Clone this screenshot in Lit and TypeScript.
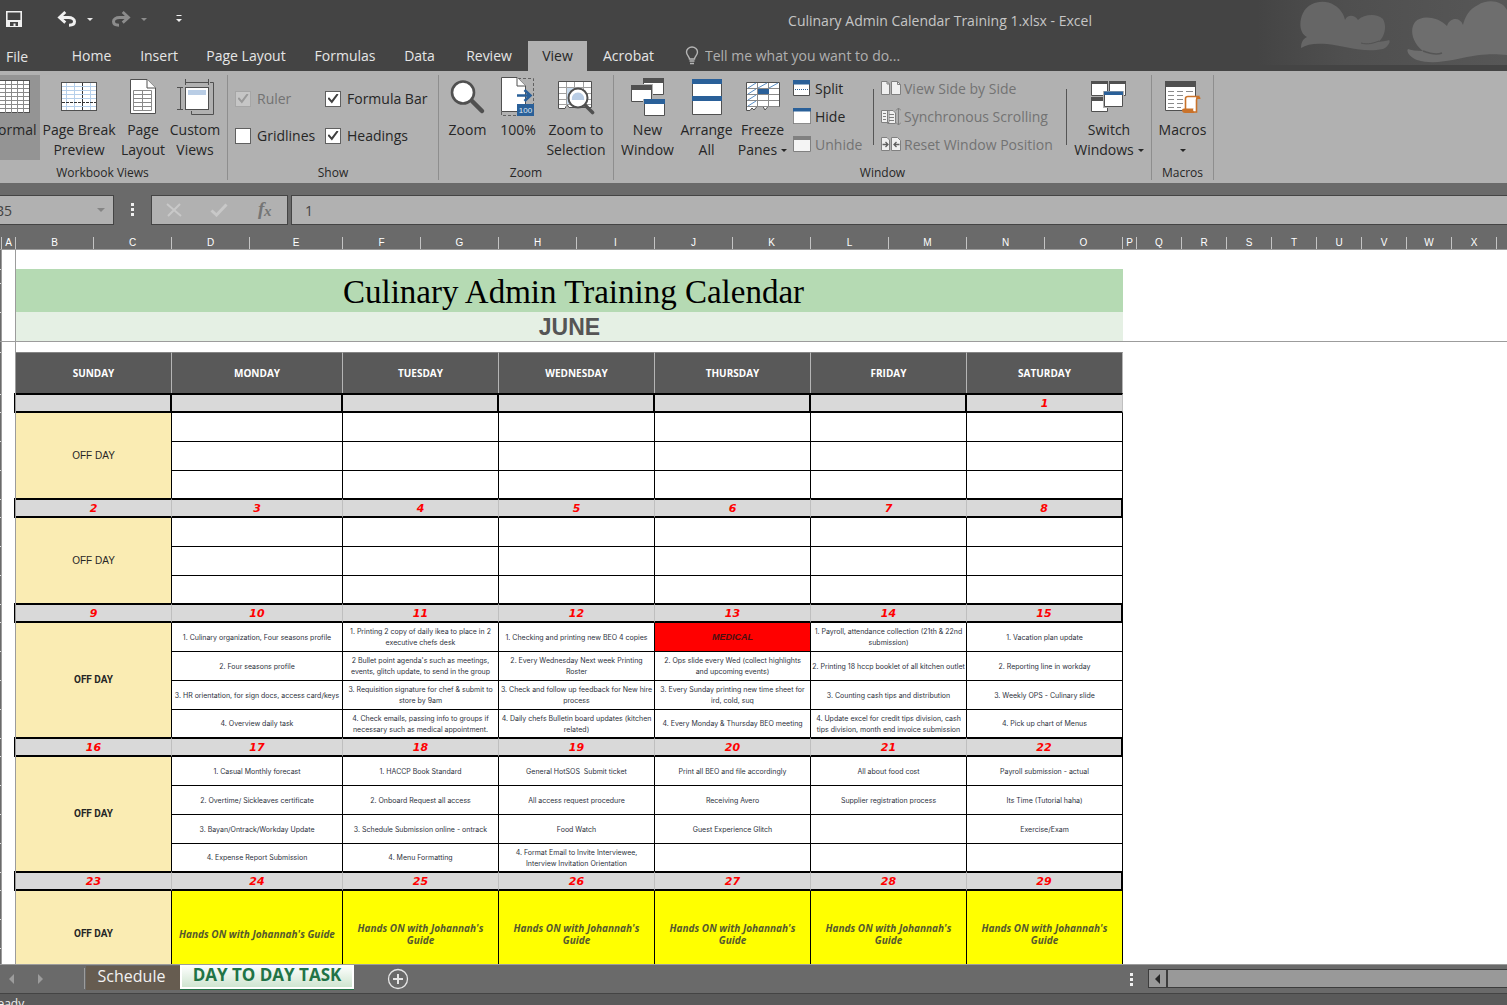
import { LitElement, html, css, svg, nothing } from "lit";
import { customElement } from "lit/decorators.js";
import { classMap } from "lit/directives/class-map.js";
import { styleMap } from "lit/directives/style-map.js";

interface Cell {
  text: string;
  medical?: boolean;
}
interface Week {
  dates: string[];
  boldOff: boolean;
  rows: (string | Cell)[][];
  guide?: boolean;
}

const DAYS = ["SUNDAY", "MONDAY", "TUESDAY", "WEDNESDAY", "THURSDAY", "FRIDAY", "SATURDAY"];
const EMPTY = ["", "", "", "", "", ""];

const WEEKS: Week[] = [
  { dates: ["", "", "", "", "", "", "1"], boldOff: false, rows: [EMPTY, EMPTY, EMPTY] },
  { dates: ["2", "3", "4", "5", "6", "7", "8"], boldOff: false, rows: [EMPTY, EMPTY, EMPTY] },
  {
    dates: ["9", "10", "11", "12", "13", "14", "15"],
    boldOff: true,
    rows: [
      [
        "1. Culinary organization, Four seasons profile",
        "1. Printing 2 copy of daily ikea to place in 2\nexecutive chefs desk",
        "1. Checking and printing new BEO 4 copies",
        { text: "MEDICAL", medical: true },
        "1. Payroll, attendance collection (21th & 22nd\nsubmission)",
        "1. Vacation plan update",
      ],
      [
        "2. Four seasons profile",
        "2 Bullet point agenda's such as meetings,\nevents, glitch update, to send in the group",
        "2. Every Wednesday Next week Printing\nRoster",
        "2. Ops slide every Wed (collect highlights\nand upcoming events)",
        "2. Printing 18 hccp booklet of all kitchen outlet",
        "2. Reporting line in workday",
      ],
      [
        "3. HR orientation, for sign docs, access card/keys",
        "3. Requisition signature for chef & submit to\nstore by 9am",
        "3. Check and follow up feedback for New hire\nprocess",
        "3. Every Sunday printing new time sheet for\nird, cold, suq",
        "3. Counting cash tips and distribution",
        "3. Weekly OPS - Culinary slide",
      ],
      [
        "4. Overview daily task",
        "4. Check emails, passing info to groups if\nnecessary such as medical appointment.",
        "4. Daily chefs Bulletin board updates (kitchen\nrelated)",
        "4. Every Monday & Thursday BEO meeting",
        "4. Update excel for credit tips division, cash\ntips division, month end invoice submission",
        "4. Pick up chart of Menus",
      ],
    ],
  },
  {
    dates: ["16", "17", "18", "19", "20", "21", "22"],
    boldOff: true,
    rows: [
      ["1. Casual Monthly forecast", "1. HACCP Book Standard", "General HotSOS  Submit ticket", "Print all BEO and file accordingly", "All about food cost", "Payroll submission - actual"],
      ["2. Overtime/ Sickleaves certificate", "2. Onboard Request all access", "All access request procedure", "Receiving Avero", "Supplier registration process", "Its Time (Tutorial haha)"],
      ["3. Bayan/Ontrack/Workday Update", "3. Schedule Submission online - ontrack", "Food Watch", "Guest Experience Glitch", "", "Exercise/Exam"],
      ["4. Expense Report Submission", "4. Menu Formatting", "4. Format Email to Invite Interviewee,\nInterview Invitation Orientation", "", "", ""],
    ],
  },
  {
    dates: ["23", "24", "25", "26", "27", "28", "29"],
    boldOff: true,
    guide: true,
    rows: [Array(6).fill("Hands ON with Johannah's Guide")],
  },
];

const COLUMNS: [string, number][] = [
  ["A", 14], ["B", 78], ["C", 78], ["D", 78], ["E", 93], ["F", 78], ["G", 78], ["H", 78],
  ["I", 78], ["J", 78], ["K", 78], ["L", 78], ["M", 78], ["N", 78], ["O", 78], ["P", 14],
  ["Q", 45], ["R", 45], ["S", 45], ["T", 45], ["U", 45], ["V", 45], ["W", 45], ["X", 45], ["", 45],
];

const ROW_TICKS_TOP = [20, 14, 29, 29];
const ROW_TICKS_BOTTOM = [11, 42, 18, 29, 29, 29, 18, 29, 29, 29, 18, 29, 29, 29, 29, 18, 29, 29, 29, 29, 18, 29, 29];

const caret = svg`<path d="M0 0H6L3 3Z" fill="currentColor"/>`;
const caretIcon = html`<svg class="caret" width="6" height="3" viewBox="0 0 6 3">${caret}</svg>`;

const icons = {
  save: html`<svg width="18" height="18" viewBox="0 0 18 18"><path d="M1.800 1.800H16.200V16.200H1.800Z" fill="none" stroke="#f0f0f0" stroke-width="1.600"/><path d="M2 10H16V16H2Z" fill="#f0f0f0"/><path d="M5 12H13V16H10.500V13.500H8.500V16H5Z" fill="#444"/></svg>`,
  undo: html`<svg width="20" height="16" viewBox="0 0 20 16"><path d="M3 6.500H11.500C15 6.500 17.500 8.300 17.500 10.500C17.500 12.700 15.500 14.200 12 14.200" fill="none" stroke="#f0f0f0" stroke-width="3"/><path d="M8.300 1L2.500 6.400L8.300 11.600" fill="none" stroke="#f0f0f0" stroke-width="2.800"/></svg>`,
  redo: html`<svg width="20" height="16" viewBox="0 0 20 16"><path d="M17 6.500H8.500C5 6.500 2.500 8.300 2.500 10.500C2.500 12.700 4.500 14.200 8 14.200" fill="none" stroke="#8c8c8c" stroke-width="3"/><path d="M11.700 1L17.500 6.400L11.700 11.600" fill="none" stroke="#8c8c8c" stroke-width="2.800"/></svg>`,
  customize: html`<svg width="6" height="8" viewBox="0 0 6 8"><path d="M.5.500H5.500" stroke="#f0f0f0"/><path d="M0 4H6L3 7Z" fill="#f0f0f0"/></svg>`,
  bulb: html`<svg width="14" height="19" viewBox="0 0 14 19"><path d="M4.500 13C4.500 10.500 1.500 9.500 1.500 6A5.500 5 0 0 1 12.500 6C12.500 9.500 9.500 10.500 9.500 13Z" fill="none" stroke="#b5b5b5" stroke-width="1.400"/><path d="M4.500 15H9.500M5 17.500H9" stroke="#b5b5b5" stroke-width="1.400"/></svg>`,
  normal: html`<svg width="36" height="34" viewBox="0 0 36 34"><rect x=".5" y=".5" width="35" height="32" fill="#fff" stroke="#505050"/><path d="M5.500 1V33M11.500 1V33M17.500 1V33M23.500 1V33M29.500 1V33M1 4.500H35M1 8.500H35M1 12.500H35M1 16.500H35M1 20.500H35M1 24.500H35M1 28.500H35" stroke="#8a8a8a" fill="none"/></svg>`,
  pageBreak: html`<svg width="36" height="29" viewBox="0 0 36 29"><rect x=".5" y=".5" width="35" height="28" fill="#fff" stroke="#505050"/><path d="M5.500 1V28M13.500 1V28M29.500 1V28M1 4.500H35M1 8.500H35M1 12.500H35M1 16.500H35M1 24.500H35" stroke="#b5cfea" fill="none"/><path d="M21.500 1V28M1 20.500H35" stroke="#333" stroke-dasharray="3 1" fill="none"/></svg>`,
  pageLayout: html`<svg width="26" height="35" viewBox="0 0 26 35"><path d="M.5.500H17L25.500 9V34.500H.5Z" fill="#fff" stroke="#505050"/><path d="M17 .5V9H25.500" fill="#fff" stroke="#505050"/><path d="M3.500 11.500H21.500V31.500H3.500ZM12.500 11.500V31.500M3.500 15.500H21.500M3.500 19.500H21.500M3.500 23.500H21.500M3.500 27.500H21.500" fill="none" stroke="#8a8a8a"/></svg>`,
  custom: html`<svg width="37" height="36" viewBox="0 0 37 36"><path d="M8.500 0V6M31.500 0V6M8.500 3.500H31.500M0 8.500H6M0 30.500H6M3.500 8.500V30.500M33 3.500H36.500V35.500H14.500V32" fill="none" stroke="#505050"/><rect x="8.500" y="8.500" width="23" height="22" fill="#fff" stroke="#505050"/><rect x="11" y="11" width="18" height="5" fill="#b9cde5"/></svg>`,
  zoom: html`<svg width="36" height="36" viewBox="0 0 36 36"><circle cx="13" cy="13.500" r="11" fill="#fff" stroke="#505050" stroke-width="2.600"/><path d="M22 22L32 32" stroke="#505050" stroke-width="4.500" stroke-linecap="round"/></svg>`,
  hundred: html`<svg width="34" height="40" viewBox="0 0 34 40"><path d="M17 1.500H32.500V28M.5 35V38.500H16" fill="none" stroke="#606060" stroke-dasharray="3 2"/><path d="M.5.500H16L24.500 9V34.500H.5Z" fill="#fff" stroke="#505050"/><path d="M16 .5V9H24.500" fill="#fff" stroke="#505050"/><path d="M16 18.500H29M23.500 13L29.500 18.500L23.500 24" fill="none" stroke="#2a6099" stroke-width="2.600"/><rect x="16" y="27" width="17" height="12" fill="#2a6099"/><text x="24.500" y="36" text-anchor="middle" font-size="8" font-family="Liberation Sans, sans-serif" fill="#dfe9f3">100</text></svg>`,
  zoomSel: html`<svg width="38" height="36" viewBox="0 0 38 36"><path d="M1.500 2.500H34.500V28.500H12L10 25.500L8 29.500H1.500Z" fill="#fff" stroke="#505050"/><path d="M9.500 3V28M17.500 3V28M26.500 3V28M2 8.500H34M2 14.500H34M2 20.500H34M2 25.500H34" stroke="#a0a0a0" fill="none"/><rect x="10" y="9" width="7" height="16" fill="#c9dcef"/><circle cx="21" cy="19" r="9.500" fill="#fff" stroke="#505050" stroke-width="2"/><path d="M14.800 21A6.300 6.300 0 1 1 27.200 21Z" fill="#b9cde5"/><path d="M28.500 26.500L35.500 33.500" stroke="#505050" stroke-width="3.600" stroke-linecap="round"/></svg>`,
  newWindow: html`<svg width="36" height="38" viewBox="0 0 36 38"><g stroke="#505050" fill="#fff"><path d="M13.500 .5H33.500V16.500H13.500Z"/><path d="M1.500 7.500H21.500V23.500H1.500Z" stroke="#b1b1b1" stroke-width="3"/><path d="M1.500 7.500H21.500V23.500H1.500Z"/><path d="M14.500 22.500H34.500V37.500H14.500Z" stroke="#b1b1b1" stroke-width="3"/><path d="M14.500 22.500H34.500V37.500H14.500Z"/></g><path d="M13 0H34V5H13ZM1 7H22V12H1Z" fill="#505050"/><path d="M14 21H35V26H14Z" fill="#2a6099"/></svg>`,
  arrange: html`<svg width="30" height="36" viewBox="0 0 30 36"><path d="M.5.500H29.500V35.500H.5Z" fill="#fff" stroke="#505050"/><path d="M0 0H30V5H0ZM0 17H30V22H0Z" fill="#2a6099"/></svg>`,
  freeze: html`<svg width="36" height="32" viewBox="0 0 36 32"><path d="M1.500 1.500H34.500V25.500H23L20 29L18 25.500H12L9 29L7 27L5 29.500H1.500Z" fill="#fff" stroke="#505050"/><path d="M12.500 2V26M23.500 2V26M2 7.500H34M2 13.500H34M2 19.500H34M2 25.500H34" fill="none" stroke="#8a8a8a"/><path d="M3 7L11 2M13 7L22 2M24 7L33 2M3 13L11 8M3 19L11 14M3 25L11 20" stroke="#5b8fc5" fill="none"/><path d="M13 8H24V13H13Z" fill="#2a6099"/></svg>`,
  split: html`<svg width="18" height="17" viewBox="0 0 18 17"><path d="M.5 1.500H16.500V15.500H.5Z" fill="#fff" stroke="#505050"/><path d="M0 0H17V4.500H0Z" fill="#2a6099"/><path d="M2 9.500H15" stroke="#2a6099" stroke-dasharray="1 1"/></svg>`,
  hide: html`<svg width="18" height="17" viewBox="0 0 18 17"><path d="M.5 1.500H17.500V15.500H.5Z" fill="#fff" stroke="#404040" stroke-dasharray="1 1"/><path d="M0 0H18V3.500H0Z" fill="#2a6099"/></svg>`,
  unhide: html`<svg width="18" height="17" viewBox="0 0 18 17"><path d="M.5 1.500H17.500V15.500H.5Z" fill="#f4f4f4" stroke="#808080"/><path d="M0 0H18V4H0Z" fill="#808080"/></svg>`,
  side: html`<svg width="20" height="15" viewBox="0 0 20 15"><path d="M.5.500H6L8.500 3V13.500H.5ZM10.500.500H16.500L19.500 3.500V13.500H10.500Z" fill="#f0f0f0" stroke="#808080"/><path d="M6 .5V3H8.500M16.500 .5V3.500H19.500" fill="none" stroke="#808080"/></svg>`,
  sync: html`<svg width="20" height="19" viewBox="0 0 20 19"><path d="M.5 3.500H8V15.500H.5ZM6.500 3.500H12L14.500 6V16.500H6.500Z" fill="#f0f0f0" stroke="#808080"/><path d="M2 6.500H5M2 9.500H5M2 12.500H5M8 7.500H13M8 10.500H13M8 13.500H13" stroke="#808080"/><path d="M17.500 1V18M15 3.500L17.500 1L20 3.500M15 15.500L17.500 18L20 15.500" fill="none" stroke="#808080"/></svg>`,
  reset: html`<svg width="20" height="15" viewBox="0 0 20 15"><path d="M.5.500H6L8.500 3V13.500H.5ZM10.500.500H16.500L19.500 3.500V13.500H10.500Z" fill="#f0f0f0" stroke="#808080"/><path d="M1.500 7.500H7M4.500 5L7 7.500L4.500 10M18.500 7.500H13M15.500 5L13 7.500L15.500 10" fill="none" stroke="#606060" stroke-width="1.300"/></svg>`,
  switchWin: html`<svg width="36" height="34" viewBox="0 0 36 34"><g fill="#fff" stroke="#505050"><path d="M.5 1.500H16.500V15.500H.5ZM18.500 1.500H34.500V15.500H18.500ZM.5 17.500H16.500V31.500H.5Z"/><path d="M13.500 12.500H31.500V26.500H13.500Z" stroke="#b1b1b1" stroke-width="3"/><path d="M13.500 12.500H31.500V26.500H13.500Z"/></g><path d="M0 1H17V4H0ZM18 1H35V4H18ZM0 17H12V21H0Z" fill="#505050"/><path d="M13 11.500H32V15H13Z" fill="#2a6099"/></svg>`,
  macros: html`<svg width="36" height="34" viewBox="0 0 36 34"><path d="M.5 1.500H30.500V30.500H.5Z" fill="#fff" stroke="#505050"/><path d="M0 1H31V7H0Z" fill="#505050"/><path d="M3 11.500H9M12 11.500H18M21 11.500H28M3 15.500H9M12 15.500H18M3 19.500H9M12 19.500H18M3 23.500H9M12 23.500H18M3 27.500H9M12 27.500H16" stroke="#8a8a8a"/><path d="M20.500 29V18.500Q20.500 16.500 23 16.500H33Q31.500 18 31.500 20V32H22Z" fill="#fff" stroke="#c9722a" stroke-width="1.600"/><path d="M31 16H33Q35.500 16 35.500 19H32ZM17 30Q17 28.500 19 28.500H28.500Q27.500 30 29.500 33H20Q17 33 17 30Z" fill="#c9722a"/></svg>`,
};

@customElement("app-root")
export class AppRoot extends LitElement {
  static styles = css`
    :host {
      display: flex;
      flex-direction: column;
      height: 100vh;
      overflow: hidden;
      background: #6a6a6a;
      font-family: "Open Sans", "Noto Sans", sans-serif;
      font-size: 14px;
      color: #262626;
    }
    * { box-sizing: border-box; }
    svg { display: block; flex: none; }
    button {
      font: inherit;
      color: inherit;
      background: none;
      border: 0;
      padding: 0;
      margin: 0;
    }
    .top {
      flex: none;
      background: #444;
      color: #e6e6e6;
      position: relative;
      overflow: hidden;
    }
    .clouds { position: absolute; right: 0; top: 0; }
    .title {
      display: grid;
      grid-template-columns: 373px 1fr;
      align-items: center;
      height: 41px;
      position: relative;
    }
    .quick { display: flex; align-items: center; padding-left: 5px; height: 38px; align-self: start; }
    .quick button { display: flex; align-items: center; }
    .q-undo { margin-left: 34px; }
    .q-car { margin-left: 10px; }
    .q-redo { margin-left: 18px; }
    .q-cust { margin-left: 29px; }
    .dim { color: #8c8c8c; }
    .doc { text-align: center; color: #c6c6c6; font-weight: 400; font-size: 14px; margin: 0; }
    .tabs {
      display: grid;
      grid-template-columns: 56px 71px 64px 110px 88px 61px 78px 59px 83px 1fr;
      height: 30px;
      position: relative;
    }
    .tabs > * { padding-bottom: 2px; }
    .tabs .file { text-align: left; padding-left: 6px; padding-bottom: 0; }
    .tabs .active { background: #b1b1b1; color: #262626; }
    .tell { display: flex; align-items: center; gap: 6px; padding-left: 15px; }
    .tell input {
      background: none;
      border: 0;
      padding: 0;
      width: 240px;
      font: inherit;
      outline: 0;
    }
    .tell input::placeholder { color: #b0b0b0; opacity: 1; }
    .ribbon {
      flex: none;
      display: flex;
      background: #b1b1b1;
      height: 112px;
      padding: 4px 0 3px;
    }
    .group {
      display: flex;
      flex-direction: column;
      justify-content: space-between;
      border-right: 1px solid #8e8e8e;
    }
    .views { margin-left: -22px; width: 250px; }
    .show { width: 211px; }
    .zoomg { width: 175px; }
    .window { width: 538px; }
    .macros { width: 62px; }
    .caption { text-align: center; font-size: 12px; line-height: 16px; height: 15px; }
    .tools { display: grid; }
    .views .tools { grid-template-columns: 56px 78px 50px 54px; padding-left: 6px; }
    .zoomg .tools { grid-template-columns: 51px 50px 66px; padding-left: 3px; }
    .window .tools { grid-template-columns: 59px 59px 53px 84px 194px 84px; padding-left: 4px; }
    .big {
      display: flex;
      flex-direction: column;
      align-items: center;
      height: 85px;
      line-height: 20px;
      white-space: nowrap;
    }
    .big .pic { height: 45px; display: grid; place-items: center; padding-bottom: 2px; }
    .big .lines { display: flex; flex-direction: column; align-items: center; }
    .big .with-caret { display: flex; align-items: center; gap: 4px; min-height: 20px; }
    .pressed { background: #949494; }
    .checks {
      display: grid;
      grid-template-columns: 90px 1fr;
      grid-auto-rows: 37px;
      padding: 5px 0 0 7px;
    }
    .checks label { display: flex; align-items: center; gap: 6px; white-space: nowrap; }
    .off { color: #737373; }
    .checks input {
      appearance: none;
      width: 16px;
      height: 16px;
      margin: 0;
      flex: none;
      background: #fff;
      border: 1px solid #606060;
      display: grid;
      place-items: center;
    }
    .checks input:checked::before {
      content: "";
      width: 11px;
      height: 10px;
      background: #404040;
      clip-path: polygon(0 50%, 14% 38%, 38% 68%, 85% 0, 100% 10%, 40% 100%);
    }
    .checks input:disabled { background: #c6c6c6; border-color: #a6a6a6; }
    .checks input:disabled:checked::before { background: #9a9a9a; }
    .stack { display: grid; grid-auto-rows: 28px; }
    .stack button { display: flex; align-items: center; white-space: nowrap; padding-bottom: 2px; }
    .stack .s-icon { width: 22px; display: flex; }
    .stack.rest {
      border-left: 1px solid #555;
      border-right: 1px solid #555;
      margin: 14px 0 16px;
      padding-left: 7px;
      align-content: center;
      height: 56px;
    }
    .stack.rest .s-icon { width: 23px; }
    .list { padding-left: 4px; }
    .formula {
      flex: none;
      display: flex;
      height: 54px;
      padding-top: 12px;
      color: #444;
    }
    .box {
      height: 30px;
      background: #b1b1b1;
      border: 1px solid #444;
      display: flex;
      align-items: center;
    }
    .name { width: 120px; margin-left: -6px; padding: 0 8px 0 0; color: #858585; }
    .name input, .entry input {
      background: none;
      border: 0;
      outline: 0;
      padding: 0;
      font: inherit;
      color: #444;
      width: 100%;
      min-width: 0;
    }
    .dots { width: 37px; display: grid; justify-content: center; align-content: center; gap: 2px; height: 29px; }
    .dots i { width: 3px; height: 3px; background: #f0f0f0; }
    .fx { width: 137px; justify-content: space-between; padding: 0 14px; margin-right: 3px; }
    .entry { flex: 1; border-right: 0; padding-left: 13px; }
    .heads {
      flex: none;
      display: flex;
      height: 13px;
      border-bottom: 1px solid #9c9c9c;
      padding-left: 1px;
      color: #fff;
      font: 10px/12px "Liberation Sans", sans-serif;
      overflow: hidden;
    }
    .heads span { flex: none; border-left: 1px solid #c4c4c4; text-align: center; }
    .pane { display: flex; background: #fff; overflow: hidden; }
    .pane.upper { flex: none; height: 92px; border-bottom: 1px solid #9c9c9c; }
    .pane.lower { flex: 1; min-height: 0; }
    .row-heads { width: 2px; background: #6a6a6a; border-right: 1px solid #9c9c9c; overflow: hidden; flex: none; }
    .row-heads i { display: block; border-bottom: 1px solid #e0e0e0; }
    .col-a { width: 14px; flex: none; border-right: 1px solid #9c9c9c; }
    .banner { width: 1107px; padding-top: 19px; text-align: center; }
    .banner h1 {
      margin: 0;
      height: 43px;
      background: #b5dab3;
      color: #000;
      font: 400 33px/46px "Liberation Serif", serif;
      padding-left: 8px;
    }
    .banner h2 {
      margin: 0;
      height: 29px;
      background: #e5f0e4;
      color: #555;
      font: 700 23px/31px "Liberation Sans", sans-serif;
    }
    table {
      margin-top: 10px;
      width: 1107px;
      table-layout: fixed;
      border-collapse: separate;
      border-spacing: 0;
      flex: none;
      align-self: flex-start;
    }
    col { width: 156px; }
    col.mon { width: 171px; }
    th, td {
      padding: 0;
      text-align: center;
      vertical-align: middle;
      border-right: 1px solid #000;
    }
    .day {
      height: 41px;
      background: #595959;
      color: #fff;
      border-top: 1px solid #858585;
      border-right-color: #b5b5b5;
      font: 700 10px/12px "Open Sans", sans-serif;
    }
    .date {
      height: 20px;
      background: #d9d9d9;
      color: #f00;
      border-top: 2px solid #000;
      border-bottom: 2px solid #000;
      border-right-color: #bfbfbf;
      padding-top: 2px;
      font: italic 700 11px/14px "DejaVu Sans", sans-serif;
    }
    .date:first-child { box-shadow: -1px 0 #9c9c9c, -2px 0 #000; }
    .date:last-child { border-right: 2px solid #000; }
    .first .date { border-right: 2px solid #000; }
    .first .date:last-child { border-right: 1px solid #bfbfbf; }
    .task {
      height: 29px;
      border-bottom: 1px solid #000;
      white-space: pre;
      color: #2c313c;
      font: 7px/11px Inter, "Liberation Sans", sans-serif;
    }
    .last .task { height: 27px; border-bottom: 0; }
    .sunday {
      background: #faecb3;
      font: 10px/12px "Liberation Sans", sans-serif;
    }
    .bold { font-weight: 700; font-family: Roboto, sans-serif; }
    .task.medical {
      background: #f00;
      color: #4a1010;
      font: italic 700 9px/11px "Liberation Sans", sans-serif;
    }
    .guide {
      height: 85px;
      background: #ff0;
      color: #55592e;
      white-space: normal;
      padding: 0 4px;
      font: italic 700 10px/12px "Open Sans", sans-serif;
    }
    .bottom {
      flex: none;
      display: flex;
      height: 29px;
      border-top: 1px solid #9c9c9c;
    }
    .nav { display: flex; width: 85px; border-right: 1px solid #9c9c9c; margin: 3px 0 4px; padding-left: 9px; gap: 24px; align-items: center; }
    .sheet-tab { height: 24px; font-size: 16px; line-height: 20px; white-space: nowrap; padding-bottom: 3px; }
    .plain { margin: 1px 0 0 1px; width: 94px; padding: 0 3px 6px 0; background: #665c50; color: #f2f2f2; }
    .current {
      width: 174px;
      color: #217346;
      font-weight: 700;
      font-size: 17px;
      background: linear-gradient(#fff, #cfe5d0);
      border: 2px solid #fff;
      border-top: 0;
      box-shadow: 0 1px #217346;
    }
    .add { margin-left: 33px; }
    .bottom .dots { margin-left: auto; height: 28px; width: 33px; }
    .scroll {
      width: 359px;
      height: 19px;
      margin-top: 4px;
      display: flex;
      border: 1px solid #3c3c3c;
      border-right: 0;
      background: #999;
    }
    .scroll button { width: 19px; border-right: 2px solid #3c3c3c; display: grid; place-items: center; }
    .status {
      flex: none;
      height: 12px;
      background: #5a5a5a;
      border-top: 1px solid #444;
      color: #f0f0f0;
      overflow: hidden;
      font-size: 12px;
      line-height: 20px;
    }
    .status span { margin-left: -10px; }
  `;

  private big(icon: unknown, lines: string[], opts: { caret?: boolean; pressed?: boolean } = {}) {
    const last = lines.length - 1;
    return html`<button class=${classMap({ big: true, pressed: !!opts.pressed })}>
      <span class="pic">${icon}</span>
      <span class="lines">${lines.map(
        (l, i) => html`<span class="with-caret">${l ? html`<span>${l}</span>` : nothing}${opts.caret && i === last ? caretIcon : nothing}</span>`,
      )}</span>
    </button>`;
  }

  private small(icon: unknown, label: string, off = false) {
    return html`<button class=${classMap({ off })} ?disabled=${off}><span class="s-icon">${icon}</span>${label}</button>`;
  }

  private week(w: Week, index: number) {
    return html`
      <tr class=${classMap({ first: index === 0 })}>
        ${w.dates.map((d) => html`<td class="date">${d}</td>`)}
      </tr>
      ${w.rows.map(
        (row, r) => html`<tr class=${classMap({ last: r === w.rows.length - 1 })}>
          ${r === 0
            ? html`<td class=${classMap({ sunday: true, bold: w.boldOff })} rowspan=${w.rows.length}>OFF DAY</td>`
            : nothing}
          ${row.map((c) => {
            const cell: Cell = typeof c === "string" ? { text: c } : c;
            return w.guide
              ? html`<td class="guide">${cell.text}</td>`
              : html`<td class=${classMap({ task: true, medical: !!cell.medical })}>${cell.text}</td>`;
          })}
        </tr>`,
      )}
    `;
  }

  render() {
    return html`
      <header class="top">
        <svg class="clouds" width="250" height="65" viewBox="0 0 250 65" aria-hidden="true">
          <defs><linearGradient id="sky"><stop offset="0" stop-color="#444"/><stop offset=".35" stop-color="#4f4f4f"/><stop offset="1" stop-color="#575757"/></linearGradient></defs>
          <rect width="250" height="65" fill="url(#sky)"/>
          <path d="M44 48C44 42 46 39 50 37C42 33 42 21 46 13C52 1 68 -1 77 5C84 9 87 15 88 20C90 15 97 14 101 20C107 14 120 13 126 19C130 26 128 37 121 42C126 41 131 41 132 40C134 41 131 47 126 49C105 53 90 46 70 44C58 43 50 44 44 48Z" fill="#666"/>
          <path d="M104 43C111 45 117 43 122 41" fill="none" stroke="#525252"/>
          <path d="M250 10C245 0 230 -1 221 5C212 9 208 17 206 25C203 17 193 17 190 26C180 16 164 15 158 22C151 32 158 45 166 51C159 51 154 50 151 49C149 51 152 57 160 60C180 66 200 58 222 55C232 54 240 54 250 55Z" fill="#6e6e6e"/>
          <path d="M166 51C174 54 180 55 185 53" fill="none" stroke="#555" stroke-width="1.500"/>
        </svg>
        <div class="title">
          <div class="quick">
            <button aria-label="Save">${icons.save}</button>
            <button class="q-undo" aria-label="Undo">${icons.undo}</button>
            <button class="q-car" aria-label="Undo list">${caretIcon}</button>
            <button class="q-redo" aria-label="Redo">${icons.redo}</button>
            <button class="q-car dim" aria-label="Redo list">${caretIcon}</button>
            <button class="q-cust" aria-label="Customize toolbar">${icons.customize}</button>
          </div>
          <p class="doc">Culinary Admin Calendar Training 1.xlsx - Excel</p>
        </div>
        <nav class="tabs">
          <button class="file">File</button>
          ${["Home", "Insert", "Page Layout", "Formulas", "Data", "Review", "View", "Acrobat"].map(
            (t) => html`<button class=${classMap({ active: t === "View" })}>${t}</button>`,
          )}
          <label class="tell">${icons.bulb}<input type="text" aria-label="Tell me" placeholder="Tell me what you want to do..." /></label>
        </nav>
      </header>

      <section class="ribbon">
        <div class="group views">
          <div class="tools">
            ${this.big(icons.normal, ["Normal"], { pressed: true })}
            ${this.big(icons.pageBreak, ["Page Break", "Preview"])}
            ${this.big(icons.pageLayout, ["Page", "Layout"])}
            ${this.big(icons.custom, ["Custom", "Views"])}
          </div>
          <div class="caption">Workbook Views</div>
        </div>
        <div class="group show">
          <div class="checks">
            <label class="off"><input type="checkbox" checked disabled />Ruler</label>
            <label><input type="checkbox" checked />Formula Bar</label>
            <label><input type="checkbox" />Gridlines</label>
            <label><input type="checkbox" checked />Headings</label>
          </div>
          <div class="caption">Show</div>
        </div>
        <div class="group zoomg">
          <div class="tools">
            ${this.big(icons.zoom, ["Zoom"])}
            ${this.big(icons.hundred, ["100%"])}
            ${this.big(icons.zoomSel, ["Zoom to", "Selection"])}
          </div>
          <div class="caption">Zoom</div>
        </div>
        <div class="group window">
          <div class="tools">
            ${this.big(icons.newWindow, ["New", "Window"])}
            ${this.big(icons.arrange, ["Arrange", "All"])}
            ${this.big(icons.freeze, ["Freeze", "Panes"], { caret: true })}
            <div class="stack list">
              ${this.small(icons.split, "Split")}
              ${this.small(icons.hide, "Hide")}
              ${this.small(icons.unhide, "Unhide", true)}
            </div>
            <div class="stack rest">
              ${this.small(icons.side, "View Side by Side", true)}
              ${this.small(icons.sync, "Synchronous Scrolling", true)}
              ${this.small(icons.reset, "Reset Window Position", true)}
            </div>
            ${this.big(icons.switchWin, ["Switch", "Windows"], { caret: true })}
          </div>
          <div class="caption">Window</div>
        </div>
        <div class="group macros">
          <div class="tools">${this.big(icons.macros, ["Macros", ""], { caret: true })}</div>
          <div class="caption">Macros</div>
        </div>
      </section>

      <section class="formula">
        <div class="box name">
          <input type="text" aria-label="Name box" .value=${"B5"} />
          <svg width="8" height="4" viewBox="0 0 8 4"><path d="M0 0H8L4 4Z" fill="currentColor"/></svg>
        </div>
        <div class="dots"><i></i><i></i><i></i></div>
        <div class="box fx">
          <button aria-label="Cancel"><svg width="16" height="14" viewBox="0 0 16 14"><path d="M1 1L15 13M14 1L2 13" stroke="#c8c8c8" stroke-width="2"/></svg></button>
          <button aria-label="Enter"><svg width="18" height="14" viewBox="0 0 18 14"><path d="M1.500 7.500L6.500 12L16.500 1.500" fill="none" stroke="#c8c8c8" stroke-width="3"/></svg></button>
          <button aria-label="Insert function"><svg width="18" height="20" viewBox="0 0 18 20"><text x="3" y="15" font-family="Liberation Serif, serif" font-style="italic" font-weight="700" font-size="19" fill="#757575">f</text><text x="9" y="16" font-family="Liberation Serif, serif" font-style="italic" font-weight="700" font-size="15" fill="#757575">x</text></svg></button>
        </div>
        <div class="box entry"><input type="text" aria-label="Formula" .value=${"1"} /></div>
      </section>

      <div class="heads">
        ${COLUMNS.map(([n, w]) => html`<span style=${styleMap({ width: `${w}px` })}>${n}</span>`)}
      </div>
      <div class="pane upper">
        <div class="row-heads">${ROW_TICKS_TOP.map((h) => html`<i style=${styleMap({ height: `${h}px` })}></i>`)}</div>
        <div class="col-a"></div>
        <div class="banner">
          <h1>Culinary Admin Training Calendar</h1>
          <h2>JUNE</h2>
        </div>
      </div>
      <div class="pane lower">
        <div class="row-heads">${ROW_TICKS_BOTTOM.map((h) => html`<i style=${styleMap({ height: `${h}px` })}></i>`)}</div>
        <div class="col-a"></div>
        <table>
          <colgroup>
            <col /><col class="mon" /><col /><col /><col /><col /><col />
          </colgroup>
          <thead>
            <tr>${DAYS.map((d) => html`<th class="day" scope="col">${d}</th>`)}</tr>
          </thead>
          <tbody>${WEEKS.map((w, i) => this.week(w, i))}</tbody>
        </table>
      </div>

      <footer class="bottom">
        <div class="nav">
          <button aria-label="Previous sheet"><svg width="5" height="10" viewBox="0 0 5 10"><path d="M5 0V10L0 5Z" fill="#9c9c9c"/></svg></button>
          <button aria-label="Next sheet"><svg width="5" height="10" viewBox="0 0 5 10"><path d="M0 0V10L5 5Z" fill="#9c9c9c"/></svg></button>
        </div>
        <button class="sheet-tab plain">Schedule</button>
        <button class="sheet-tab current">DAY TO DAY TASK</button>
        <button class="add" aria-label="New sheet"><svg width="22" height="22" viewBox="0 0 22 22"><circle cx="11" cy="11" r="9.500" fill="none" stroke="#e6e6e6" stroke-width="1.300"/><path d="M11 6V16M6 11H16" stroke="#e6e6e6" stroke-width="2"/></svg></button>
        <div class="dots"><i></i><i></i><i></i></div>
        <div class="scroll"><button aria-label="Scroll left"><svg width="5" height="10" viewBox="0 0 5 10"><path d="M5 0V10L0 5Z" fill="#262626"/></svg></button></div>
      </footer>
      <div class="status"><span>Ready</span></div>
    `;
  }
}
